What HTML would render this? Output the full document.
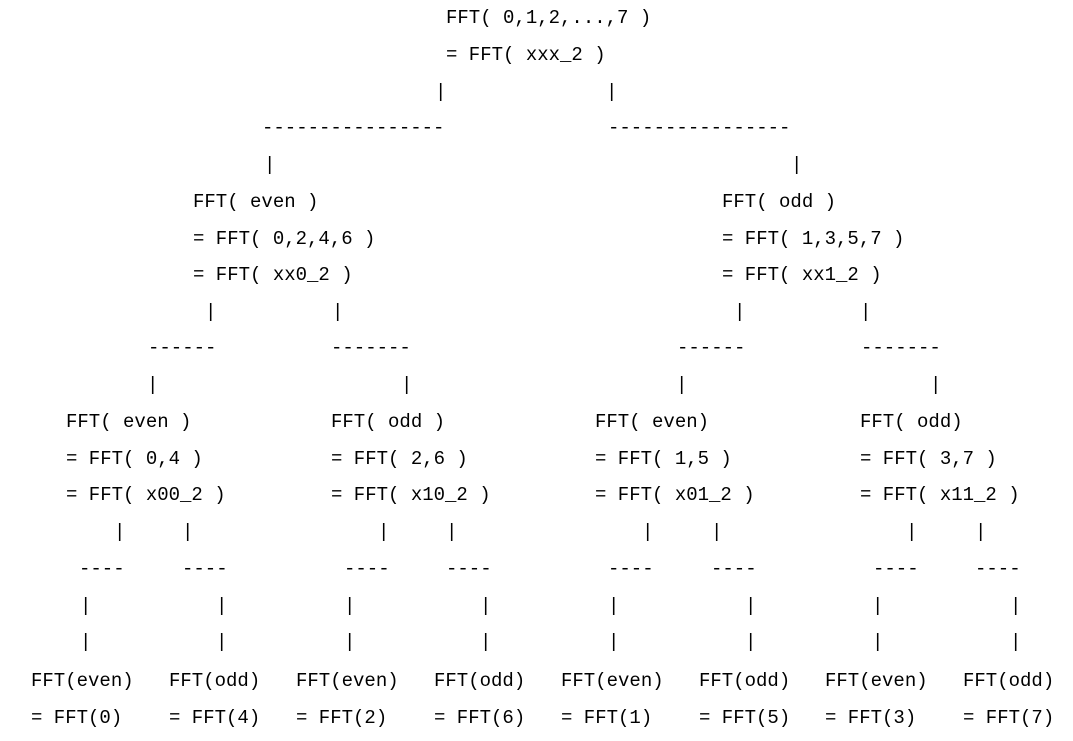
<!DOCTYPE html>
<html><head><meta charset="utf-8"><style>
body{margin:0;width:1073px;height:741px;background:#fff;position:relative;overflow:hidden}
div{position:absolute;white-space:pre;font-family:"Liberation Mono",monospace;font-size:19px;line-height:20px;color:#000}
</style></head><body>
<div style="left:446px;top:8px">FFT( 0,1,2,...,7 )</div>
<div style="left:446px;top:45px">= FFT( xxx_2 )</div>
<div style="left:435px;top:82px">|</div><div style="left:606px;top:82px">|</div>
<div style="left:262px;top:118px">----------------</div><div style="left:608px;top:118px">----------------</div>
<div style="left:264px;top:155px">|</div><div style="left:791px;top:155px">|</div>
<div style="left:193px;top:192px">FFT( even )</div><div style="left:722px;top:192px">FFT( odd )</div>
<div style="left:193px;top:229px">= FFT( 0,2,4,6 )</div><div style="left:722px;top:229px">= FFT( 1,3,5,7 )</div>
<div style="left:193px;top:265px">= FFT( xx0_2 )</div><div style="left:722px;top:265px">= FFT( xx1_2 )</div>
<div style="left:205px;top:302px">|</div><div style="left:332px;top:302px">|</div><div style="left:734px;top:302px">|</div><div style="left:860px;top:302px">|</div>
<div style="left:148px;top:338px">------</div><div style="left:331px;top:338px">-------</div><div style="left:677px;top:338px">------</div><div style="left:861px;top:338px">-------</div>
<div style="left:147px;top:375px">|</div><div style="left:401px;top:375px">|</div><div style="left:676px;top:375px">|</div><div style="left:930px;top:375px">|</div>
<div style="left:66px;top:412px">FFT( even )</div><div style="left:331px;top:412px">FFT( odd )</div><div style="left:595px;top:412px">FFT( even)</div><div style="left:860px;top:412px">FFT( odd)</div>
<div style="left:66px;top:449px">= FFT( 0,4 )</div><div style="left:331px;top:449px">= FFT( 2,6 )</div><div style="left:595px;top:449px">= FFT( 1,5 )</div><div style="left:860px;top:449px">= FFT( 3,7 )</div>
<div style="left:66px;top:485px">= FFT( x00_2 )</div><div style="left:331px;top:485px">= FFT( x10_2 )</div><div style="left:595px;top:485px">= FFT( x01_2 )</div><div style="left:860px;top:485px">= FFT( x11_2 )</div>
<div style="left:114px;top:522px">|</div><div style="left:182px;top:522px">|</div><div style="left:378px;top:522px">|</div><div style="left:446px;top:522px">|</div><div style="left:642px;top:522px">|</div><div style="left:711px;top:522px">|</div><div style="left:906px;top:522px">|</div><div style="left:975px;top:522px">|</div>
<div style="left:79px;top:559px">----</div><div style="left:182px;top:559px">----</div><div style="left:344px;top:559px">----</div><div style="left:446px;top:559px">----</div><div style="left:608px;top:559px">----</div><div style="left:711px;top:559px">----</div><div style="left:873px;top:559px">----</div><div style="left:975px;top:559px">----</div>
<div style="left:80px;top:596px">|</div><div style="left:216px;top:596px">|</div><div style="left:344px;top:596px">|</div><div style="left:480px;top:596px">|</div><div style="left:608px;top:596px">|</div><div style="left:745px;top:596px">|</div><div style="left:872px;top:596px">|</div><div style="left:1010px;top:596px">|</div>
<div style="left:80px;top:632px">|</div><div style="left:216px;top:632px">|</div><div style="left:344px;top:632px">|</div><div style="left:480px;top:632px">|</div><div style="left:608px;top:632px">|</div><div style="left:745px;top:632px">|</div><div style="left:872px;top:632px">|</div><div style="left:1010px;top:632px">|</div>
<div style="left:31px;top:671px">FFT(even)</div><div style="left:169px;top:671px">FFT(odd)</div><div style="left:296px;top:671px">FFT(even)</div><div style="left:434px;top:671px">FFT(odd)</div><div style="left:561px;top:671px">FFT(even)</div><div style="left:699px;top:671px">FFT(odd)</div><div style="left:825px;top:671px">FFT(even)</div><div style="left:963px;top:671px">FFT(odd)</div>
<div style="left:31px;top:708px">= FFT(0)</div><div style="left:169px;top:708px">= FFT(4)</div><div style="left:296px;top:708px">= FFT(2)</div><div style="left:434px;top:708px">= FFT(6)</div><div style="left:561px;top:708px">= FFT(1)</div><div style="left:699px;top:708px">= FFT(5)</div><div style="left:825px;top:708px">= FFT(3)</div><div style="left:963px;top:708px">= FFT(7)</div>
</body></html>
